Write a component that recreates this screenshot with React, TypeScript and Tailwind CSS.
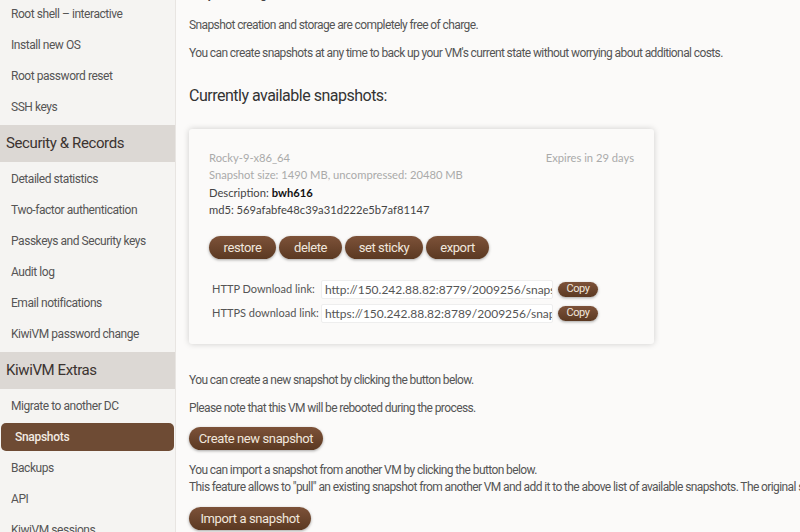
import React from "react";

const narrow = { fontFamily: 'Roboto, "Liberation Sans", sans-serif' };
const card = { fontFamily: 'Lato, "Open Sans", sans-serif' };

function SideItem({ label, active }: { label: string; active?: boolean }) {
  if (active) {
    return (
      <div className="h-[31px] flex items-center px-px">
        <div className="h-[28px] w-full rounded-[5px] bg-[#6e4b34] text-[#f3ebe3] text-[12px] tracking-[-0.3px] flex items-center pl-[14px] font-medium">
          {label}
        </div>
      </div>
    );
  }
  return (
    <div className="h-[31px] flex items-center pl-[11px] text-[12px] tracking-[-0.45px] text-[#555]">{label}</div>
  );
}

function SideHeader({ label }: { label: string }) {
  return (
    <div className="h-[37px] mt-[3px] mb-[1px] bg-[#dcd8d4] flex items-center pl-[6px] text-[15px] tracking-[-0.4px] text-[#3b3330]">
      {label}
    </div>
  );
}

function Btn({ children, className = "" }: { children: React.ReactNode; className?: string }) {
  return (
    <button
      className={
        "rounded-full bg-gradient-to-b from-[#7d5239] to-[#5b3922] text-[#f1e7dd] shadow-[0_1px_3px_rgba(0,0,0,0.35)] flex items-center justify-center tracking-[-0.4px] " +
        className
      }
      style={narrow}
    >
      {children}
    </button>
  );
}

function LinkRow({ label, url }: { label: string; url: string }) {
  return (
    <div className="flex items-center h-[19px]">
      <span className="w-[112px] pl-[3px] shrink-0 text-[11px] whitespace-nowrap">{label}</span>
      <div className="w-[232px] h-[19px] shrink-0 bg-white border border-[#eee] rounded-[2px] pl-[3px] overflow-hidden flex items-center">
        <span className="block overflow-hidden whitespace-nowrap">{url}</span>
      </div>
      <Btn className="ml-[5px] w-[40px] h-[15px] text-[11px] shrink-0">Copy</Btn>
    </div>
  );
}

export default function App() {
  return (
    <div className="w-[800px] h-[532px] overflow-hidden flex bg-[#fbfaf9]" style={narrow}>
      <aside className="w-[176px] shrink-0 bg-[#f5f4f2] border-r border-[#e8e5e2] -mt-[2px]">
        <SideItem label="Root shell – interactive" />
        <SideItem label="Install new OS" />
        <SideItem label="Root password reset" />
        <SideItem label="SSH keys" />
        <SideHeader label="Security & Records" />
        <SideItem label="Detailed statistics" />
        <SideItem label="Two-factor authentication" />
        <SideItem label="Passkeys and Security keys" />
        <SideItem label="Audit log" />
        <SideItem label="Email notifications" />
        <SideItem label="KiwiVM password change" />
        <SideHeader label="KiwiVM Extras" />
        <SideItem label="Migrate to another DC" />
        <SideItem label="Snapshots" active />
        <SideItem label="Backups" />
        <SideItem label="API" />
        <SideItem label="KiwiVM sessions" />
      </aside>
      <main className="flex-1 min-w-0 pl-[13px] text-[12px] tracking-[-0.6px] text-[#555] -mt-[15px] whitespace-nowrap overflow-hidden">
        <p className="h-[16px] font-bold text-[#444]">Snapshot billing:</p>
        <p className="mt-[16px] leading-[17px]">Snapshot creation and storage are completely free of charge.</p>
        <p className="mt-[11px] leading-[17px]">
          You can create snapshots at any time to back up your VM's current state without worrying about additional costs.
        </p>
        <h2 className="mt-[23px] text-[16px] tracking-[-0.5px] text-[#333] leading-[22px]">Currently available snapshots:</h2>
        <div
          className="mt-[22px] w-[465px] h-[215px] bg-[#fbfaf9] rounded-[3px] shadow-[0_0_6px_rgba(0,0,0,0.18)] px-[20px] pt-[20px] text-[11.2px] tracking-normal"
          style={card}
        >
          <div className="flex justify-between text-[#aaa] leading-[17.3px]">
            <span>Rocky-9-x86_64</span>
            <span>Expires in 29 days</span>
          </div>
          <div className="text-[#aaa] leading-[17.3px]">Snapshot size: 1490 MB, uncompressed: 20480 MB</div>
          <div className="text-[#444] leading-[17.3px]">
            Description: <b className="text-[#111]">bwh616</b>
          </div>
          <div className="text-[#444] leading-[17.3px]">md5: 569afabfe48c39a31d222e5b7af81147</div>
          <div className="flex gap-[3px] mt-[18px] text-[13px]">
            <Btn className="w-[67px] h-[23px]">restore</Btn>
            <Btn className="w-[63px] h-[23px]">delete</Btn>
            <Btn className="w-[78px] h-[23px]">set sticky</Btn>
            <Btn className="w-[63px] h-[23px]">export</Btn>
          </div>
          <div className="mt-[21px] flex flex-col gap-[5px] text-[#555] text-[12px]">
            <LinkRow label="HTTP Download link:" url="http://150.242.88.82:8779/2009256/snapsh" />
            <LinkRow label="HTTPS download link:" url="https://150.242.88.82:8789/2009256/snaps" />
          </div>
        </div>
        <p className="mt-[28px] leading-[17px]">You can create a new snapshot by clicking the button below.</p>
        <p className="mt-[11px] leading-[17px]">Please note that this VM will be rebooted during the process.</p>
        <Btn className="mt-[10px] w-[134px] h-[23px] text-[13px]">Create new snapshot</Btn>
        <p className="mt-[12px] leading-[17px]">You can import a snapshot from another VM by clicking the button below.</p>
        <p className="leading-[17px]">
          This feature allows to "pull" an existing snapshot from another VM and add it to the above list of available snapshots. The original snapshot will not be affected.
        </p>
        <Btn className="mt-[11px] w-[122px] h-[23px] text-[13px]">Import a snapshot</Btn>
      </main>
    </div>
  );
}
